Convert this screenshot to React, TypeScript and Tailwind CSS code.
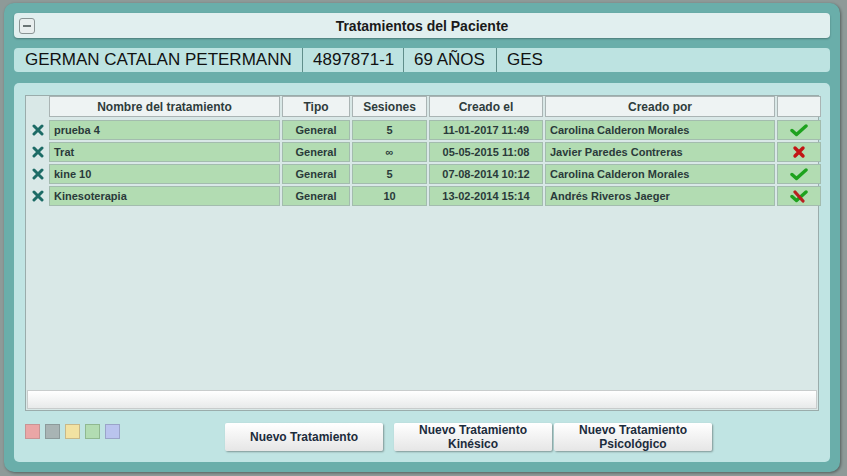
const font = { fontFamily: '"Liberation Sans", Arial, sans-serif' }

type Status = 'ok' | 'no' | 'mixed'

const rows: { name: string; tipo: string; ses: string; fecha: string; por: string; status: Status }[] = [
  { name: 'prueba 4', tipo: 'General', ses: '5', fecha: '11-01-2017 11:49', por: 'Carolina Calderon Morales', status: 'ok' },
  { name: 'Trat', tipo: 'General', ses: '∞', fecha: '05-05-2015 11:08', por: 'Javier Paredes Contreras', status: 'no' },
  { name: 'kine 10', tipo: 'General', ses: '5', fecha: '07-08-2014 10:12', por: 'Carolina Calderon Morales', status: 'ok' },
  { name: 'Kinesoterapia', tipo: 'General', ses: '10', fecha: '13-02-2014 15:14', por: 'Andrés Riveros Jaeger', status: 'mixed' },
]

const cols = 'grid-cols-[21px_231px_68px_75px_114px_230px_44px]'

function DeleteIcon() {
  return (
    <svg width="12" height="12" viewBox="0 0 12 12">
      <path d="M2 2 L10 10 M10 2 L2 10" stroke="#1d6b66" strokeWidth="3" strokeLinecap="round" />
    </svg>
  )
}

function Check({ color = '#1ea21e' }: { color?: string }) {
  return (
    <svg width="18" height="14" viewBox="0 0 18 14">
      <path d="M2 7.5 L6.5 11.5 L16 3" fill="none" stroke={color} strokeWidth="3.4" strokeLinecap="round" strokeLinejoin="round" />
    </svg>
  )
}

function Cross() {
  return (
    <svg width="14" height="14" viewBox="0 0 14 14">
      <path d="M3 3 L11 11 M11 3 L3 11" stroke="#c21414" strokeWidth="3.4" strokeLinecap="round" />
    </svg>
  )
}

function Mixed() {
  return (
    <svg width="18" height="14" viewBox="0 0 18 14">
      <path d="M2 7.5 L6.5 11.5 L16 3" fill="none" stroke="#1ea21e" strokeWidth="3.4" strokeLinecap="round" strokeLinejoin="round" />
      <path d="M5 3 L13 12" stroke="#b82020" strokeWidth="3.2" strokeLinecap="round" />
    </svg>
  )
}

function StatusIcon({ s }: { s: Status }) {
  if (s === 'ok') return <Check />
  if (s === 'no') return <Cross />
  return <Mixed />
}

function Cell({ children, left }: { children?: React.ReactNode; left?: boolean }) {
  return (
    <div
      className={`h-[20px] flex items-center border border-[#a3bcae] bg-[#b2dcb2] text-[11px] font-bold text-[#2a3a3a] ${left ? 'pl-[4px]' : 'justify-center'}`}
    >
      {children}
    </div>
  )
}

function Head({ children }: { children?: React.ReactNode }) {
  return (
    <div className="h-[21px] flex items-center justify-center border border-[#aab4b4] bg-[#eef3f3] text-[12px] font-bold text-[#2e3c3c]">
      {children}
    </div>
  )
}

function Button({ children }: { children: React.ReactNode }) {
  return (
    <button className="w-[158px] h-[28px] flex flex-col items-center justify-center leading-[14px] rounded-[2px] bg-gradient-to-b from-[#ffffff] to-[#e6e6e6] shadow-[1px_1px_2px_rgba(0,0,0,0.35)] text-[12px] font-bold text-[#1c2c3c]">
      {children}
    </button>
  )
}

export default function App() {
  return (
    <div className="w-[847px] h-[476px] bg-[#8e9a98] overflow-hidden pt-[3px] pl-[4px]" style={font}>
      <div className="w-[836px] h-[469px] rounded-[10px] bg-[#6aaeaa] px-[10px] pt-[10px] flex flex-col shadow-[1px_1px_3px_rgba(0,0,0,0.4)]">
        {/* title */}
        <div className="relative h-[25px] rounded-[4px] bg-[#e1efef] shadow-[0_1px_2px_rgba(0,0,0,0.3)] flex items-center justify-center">
          <div className="absolute left-[5px] top-[5px] w-[16px] h-[16px] rounded-[3px] border border-[#8a9494] bg-[#e8eeee] flex items-center justify-center">
            <div className="w-[8px] h-[2px] bg-[#6a7474]" />
          </div>
          <span className="text-[14px] font-bold text-[#1a1a1a] pt-[2px]">Tratamientos del Paciente</span>
        </div>

        {/* patient */}
        <div className="mt-[10px] h-[24px] rounded-[4px] bg-[#bde3e1] flex items-stretch text-[17px] text-[#111]">
          <div className="w-[289px] pl-[11px] flex items-center border-r border-[#5f8e8a]">GERMAN CATALAN PETERMANN</div>
          <div className="w-[101px] pl-[10px] flex items-center border-r border-[#5f8e8a]">4897871-1</div>
          <div className="w-[93px] pl-[10px] flex items-center border-r border-[#5f8e8a]">69 AÑOS</div>
          <div className="pl-[10px] flex items-center">GES</div>
        </div>

        {/* main */}
        <div className="mt-[11px] h-[379px] rounded-[5px] bg-[#c0e4e3] px-[11px] pt-[12px] flex flex-col">
          <div className="h-[316px] border border-[#9aacab] bg-[#d9e8e7] flex flex-col">
            <div className={`grid ${cols} gap-x-[2px]`}>
              <div />
              <Head>Nombre del tratamiento</Head>
              <Head>Tipo</Head>
              <Head>Sesiones</Head>
              <Head>Creado el</Head>
              <Head>Creado por</Head>
              <Head />
            </div>
            <div className={`grid ${cols} gap-x-[2px] gap-y-[2px] mt-[3px]`}>
              {rows.map((r, i) => (
                <div key={i} className="contents">
                  <div className="h-[20px] flex items-center justify-center pl-[2px]">
                    <DeleteIcon />
                  </div>
                  <Cell left>{r.name}</Cell>
                  <Cell>{r.tipo}</Cell>
                  <Cell>{r.ses}</Cell>
                  <Cell>{r.fecha}</Cell>
                  <Cell left>{r.por}</Cell>
                  <Cell>
                    <StatusIcon s={r.status} />
                  </Cell>
                </div>
              ))}
            </div>
            <div className="flex-1" />
            <div className="mx-[1px] mb-[1px] h-[19px] border border-[#c8cccc] bg-gradient-to-b from-[#ffffff] to-[#e8eaea]" />
          </div>

          <div className="mt-[12px] flex items-start">
            <div className="flex gap-[5px] pt-[1px]">
              <div className="w-[15px] h-[15px] border border-[#c89494] bg-[#eaa6a6]" />
              <div className="w-[15px] h-[15px] border border-[#8c9a9a] bg-[#a8b4b4]" />
              <div className="w-[15px] h-[15px] border border-[#c8b888] bg-[#f2e2a2]" />
              <div className="w-[15px] h-[15px] border border-[#90b890] bg-[#b2dcb2]" />
              <div className="w-[15px] h-[15px] border border-[#9aa4c8] bg-[#bac4ee]" />
            </div>
            <div className="ml-[105px] flex">
              <Button>Nuevo Tratamiento</Button>
              <div className="ml-[11px]">
                <Button>
                  <span>Nuevo Tratamiento</span>
                  <span>Kinésico</span>
                </Button>
              </div>
              <div className="ml-[2px]">
                <Button>
                  <span>Nuevo Tratamiento</span>
                  <span>Psicológico</span>
                </Button>
              </div>
            </div>
          </div>
        </div>
      </div>
    </div>
  )
}
